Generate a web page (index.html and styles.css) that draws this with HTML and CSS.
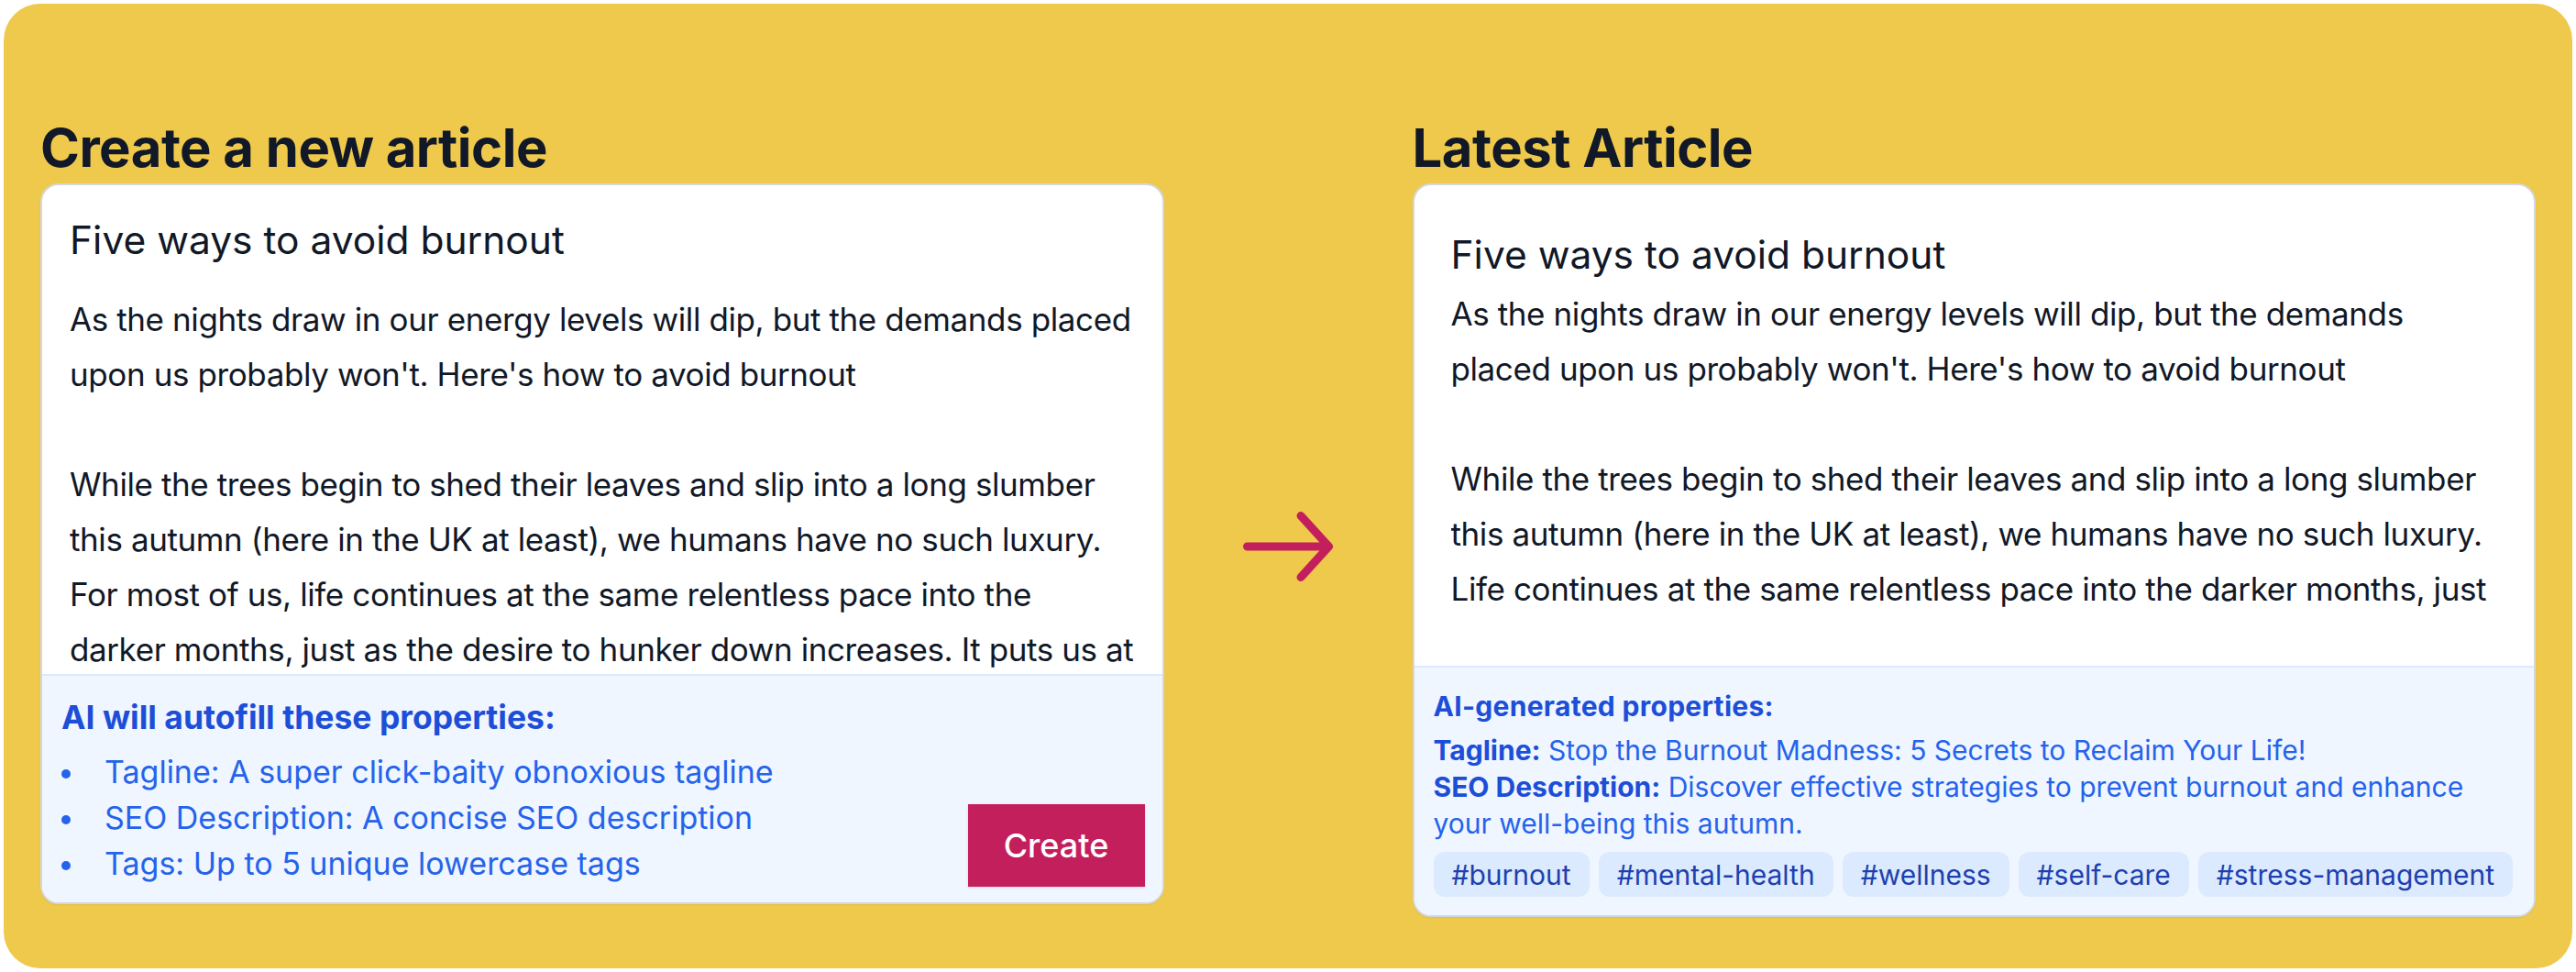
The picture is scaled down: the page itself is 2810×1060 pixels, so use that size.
FILE: index.html
```html
<!DOCTYPE html>
<html lang="en">
<head>
<meta charset="utf-8">
<title>Article AI properties</title>
<link rel="stylesheet" href="styles.css">
</head>
<body>
<div class="frame">
  <div class="layout">
    <h2 class="col-title title-left">Create a new article</h2>
    <h2 class="col-title title-right">Latest Article</h2>

    <div class="card card-edit">
      <div class="edit-body">
        <div class="edit-title">Five ways to avoid burnout</div>
        <div class="edit-text">
          <p>As the nights draw in our energy levels will dip, but the demands placed<br>upon us probably won't. Here's how to avoid burnout</p>
          <p>While the trees begin to shed their leaves and slip into a long slumber<br>this autumn (here in the UK at least), we humans have no such luxury.<br>For most of us, life continues at the same relentless pace into the<br>darker months, just as the desire to hunker down increases. It puts us at</p>
        </div>
      </div>
      <div class="props props-edit">
        <div class="props-main">
          <div class="props-heading">AI will autofill these properties:</div>
          <ul class="bullets">
            <li>Tagline: A super click-baity obnoxious tagline</li>
            <li>SEO Description: A concise SEO description</li>
            <li>Tags: Up to 5 unique lowercase tags</li>
          </ul>
        </div>
        <button class="create-btn" type="button">Create</button>
      </div>
    </div>

    <div class="arrow-col">
      <svg class="arrow" width="108" height="86" viewBox="0 0 108 86" aria-hidden="true">
        <path d="M9.5 43H98.5M68 9.5L98.5 43L68 76.5" fill="none" stroke="#c41f5d" stroke-width="9" stroke-linecap="round" stroke-linejoin="round"/>
      </svg>
    </div>

    <div class="card card-view">
      <div class="view-body">
        <h3 class="view-title">Five ways to avoid burnout</h3>
        <div class="view-text">
          <p>As the nights draw in our energy levels will dip, but the demands<br>placed upon us probably won't. Here's how to avoid burnout</p>
          <p>While the trees begin to shed their leaves and slip into a long slumber<br>this autumn (here in the UK at least), we humans have no such luxury.<br>Life continues at the same relentless pace into the darker months, just</p>
        </div>
      </div>
      <div class="props props-view">
        <div class="props-heading-sm">AI-generated properties:</div>
        <div class="prop-lines">
          <div><span class="prop-label">Tagline:</span> Stop the Burnout Madness: 5 Secrets to Reclaim Your Life!</div>
          <div><span class="prop-label">SEO Description:</span> Discover effective strategies to prevent burnout and enhance your well-being this autumn.</div>
        </div>
        <div class="tags">
          <span class="tag">#burnout</span>
          <span class="tag">#mental-health</span>
          <span class="tag">#wellness</span>
          <span class="tag">#self-care</span>
          <span class="tag">#stress-management</span>
        </div>
      </div>
    </div>
  </div>
</div>
</body>
</html>
```
FILE: styles.css
```css
* { box-sizing: border-box; }

html, body {
  margin: 0;
  padding: 0;
  background: #ffffff;
}

body {
  font-family: Inter, "Noto Sans", "Liberation Sans", sans-serif;
  color: #111827;
}

.frame {
  margin: 4px;
  height: 1052px;
  background: #efc94c;
  border-radius: 40px;
  padding: 121px 40px 0 40px;
}

.layout {
  display: grid;
  grid-template-columns: 1fr 271px 1fr;
  grid-template-rows: auto auto;
}

.col-title {
  margin: 0 0 3px 0;
  font-size: 58px;
  line-height: 72px;
  font-weight: 700;
  color: #111827;
  letter-spacing: -0.5px;
}

.title-left { grid-column: 1; grid-row: 1; }
.title-right { grid-column: 3; grid-row: 1; }

.card {
  background: #ffffff;
  border: 2px solid #d5d7dc;
  border-radius: 20px;
  overflow: hidden;
  align-self: start;
  box-shadow: 0 1px 2px rgba(0, 0, 0, 0.06);
}

.card-edit { grid-column: 1; grid-row: 2; }
.card-view { grid-column: 3; grid-row: 2; }

.edit-body {
  padding: 32px 12px 0 30px;
}

.edit-title {
  font-size: 42.5px;
  line-height: 56px;
  margin-bottom: 28px;
}

.edit-text {
  font-size: 35px;
  line-height: 60px;
  letter-spacing: -0.4px;
  height: 417px;
  overflow: hidden;
  white-space: nowrap;
}

.edit-text p,
.view-text p {
  margin: 0 0 60px 0;
}

.view-body {
  padding: 48px 18px 54px 40px;
}

.view-title {
  margin: 0 0 6px 0;
  font-size: 42.5px;
  line-height: 56px;
  font-weight: 400;
}

.view-text {
  font-size: 35px;
  line-height: 60px;
  letter-spacing: -0.4px;
  height: 360px;
  overflow: hidden;
  white-space: nowrap;
}

.props {
  background: #eff6ff;
  border-top: 2px solid #dbeafe;
}

.props-edit {
  display: flex;
  align-items: flex-end;
  justify-content: space-between;
  padding: 22px 19px 17px 21px;
}

.props-heading {
  font-size: 35.5px;
  line-height: 48px;
  font-weight: 700;
  color: #1d4ed8;
  margin-bottom: 10px;
}

.bullets {
  list-style: none;
  margin: 0;
  padding: 0;
}

.bullets li {
  display: flex;
  align-items: center;
  gap: 37px;
  font-size: 34px;
  line-height: 50px;
  color: #2563eb;
}

.bullets li::before {
  content: "";
  flex: none;
  width: 10px;
  height: 10px;
  margin-top: 3px;
  border-radius: 50%;
  background: #2563eb;
}

.create-btn {
  flex: none;
  width: 193px;
  height: 90px;
  border: none;
  border-radius: 0;
  background: #c41f5d;
  color: #ffffff;
  font-family: inherit;
  font-size: 36px;
  font-weight: 500;
  box-shadow: 0 1px 3px rgba(0, 0, 0, 0.12);
  padding: 0;
}

.props-view {
  padding: 22px 22px 20px 21px;
}

.props-heading-sm {
  font-size: 30px;
  line-height: 40px;
  font-weight: 700;
  color: #1d4ed8;
  margin-bottom: 8px;
  letter-spacing: 0.3px;
}

.prop-lines {
  font-size: 30px;
  line-height: 40px;
  color: #2563eb;
  margin-bottom: 11px;
}

.prop-label {
  font-weight: 700;
  color: #1d4ed8;
}

.tags {
  display: flex;
  flex-wrap: wrap;
  gap: 10px;
}

.tag {
  font-size: 30px;
  line-height: 40px;
  padding: 4.5px 20px;
  border-radius: 12px;
  background: #dbeafe;
  color: #1e40af;
}

.arrow-col {
  grid-column: 2;
  grid-row: 2;
  align-self: center;
  justify-self: center;
  margin-bottom: 8px;
  display: flex;
}
```
